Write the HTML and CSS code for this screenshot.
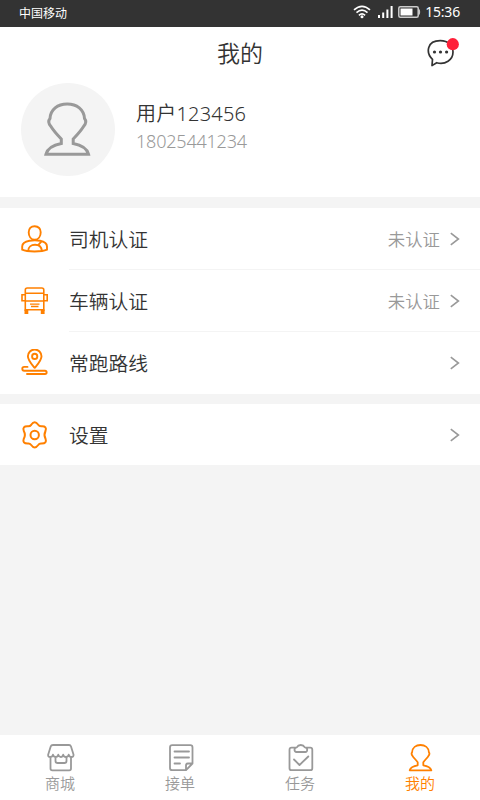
FILE: index.html
```html
<!DOCTYPE html>
<html lang="zh-CN">
<head>
<meta charset="utf-8">
<title>我的</title>
<link rel="stylesheet" href="styles.css">
</head>
<body>
<div class="app">
  <div class="status">
    <span class="carrier">中国移动</span>
    <div class="status-right">
      <svg class="wifi" width="18" height="14" viewBox="0 0 18 14" fill="none" stroke="#fff" stroke-width="1.6"><path d="M1 4.900Q9-2.300 17 4.900M3.500 7.700Q9 2.700 14.500 7.700M5.900 10.300Q9 7.400 12.100 10.300"/><circle cx="9" cy="11.800" r="1.500" fill="#fff" stroke="none"/></svg>
      <svg class="signal" width="15" height="12" viewBox="0 0 15 12" fill="#fff"><path d="M0 9h2v3H0zM4.200 6.500h2V12h-2zM8.400 3.500h2V12h-2zM12.600 0h2v12h-2z"/></svg>
      <svg class="battery" width="23" height="12" viewBox="0 0 23 12"><rect x=".8" y=".8" width="19.400" height="10.400" rx="1.500" fill="none" stroke="#ccc" stroke-width="1.500"/><path d="M2.500 2.500H14.500v7h-12z" fill="#fff"/><path d="M21 3.500q1.500 2.500 0 5z" fill="#ccc" stroke="#ccc"/></svg>
      <span class="time">15:36</span>
    </div>
  </div>

  <div class="top">
    <div class="titlebar">
      <h1>我的</h1>
      <svg class="chat" width="33" height="30" viewBox="0 0 33 30"><path d="M5.500 22.300C-1.500 15.500 0 3.700 13.200 3.700c8.500 0 12.800 5 12.800 11.300 0 8-7.800 13-16.300 10.700L5 28.600z" fill="none" stroke="#333" stroke-width="1.700" stroke-linejoin="round"/><g fill="#333"><circle cx="7.500" cy="15" r="1.600"/><circle cx="13.500" cy="15" r="1.600"/><circle cx="19.600" cy="15" r="1.600"/></g><circle cx="25.800" cy="7.200" r="6.100" fill="#ff1f38"/></svg>
    </div>
    <div class="profile">
      <div class="avatar">
        <svg width="47" height="54" viewBox="0 0 47 54" fill="none" stroke="#999" stroke-width="3"><path d="M17.300 41.500V37C13.500 33 8.500 27 6.800 24.200 4.500 21.500 4.300 18.500 6 16.500 6.500 7.500 13.500 2 23.200 2S40 7.500 40.500 16.500c1.700 2 1.500 5-.8 7.700C38 27 33 33 29.200 37v4.500C37 43 43 46.500 44.500 52.200H2C3.500 46.500 9.500 43 17.300 41.500z"/></svg>
      </div>
      <div class="user">
        <div class="name">用户123456</div>
        <div class="phone">18025441234</div>
      </div>
    </div>
  </div>

  <div class="group">
    <div class="row">
      <svg class="icon" width="28" height="28" viewBox="0 0 28 28" fill="none" stroke="#ff8000" stroke-width="1.900"><path d="M13.700 1.200C9.800 1.200 7.700 4 7.700 7.300c0 4 2.200 7.500 6 7.500s6-3.500 6-7.500c0-3.300-2.100-6.100-6-6.100z"/><path d="M8.500 15.700C4 16.500 1.200 18.500 1.200 21.500v3.200C6 27.100 21 27.100 26 24.700v-3.200c0-3-2.500-5-7-5.800-4-.500-6.500-.500-10.500 0zM7.200 26c0-4 3-6.300 6.800-6.300S20.600 22 20.800 26M17 20.300l3.500-4"/></svg>
      <span class="label">司机认证</span><span class="state">未认证</span>
      <svg class="arrow" width="10" height="14" viewBox="0 0 10 14"><path d="M.8 1.200L8.400 7 .8 12.800"/></svg>
    </div>
    <div class="row line">
      <svg class="icon" width="28" height="28" viewBox="0 0 28 28" fill="none" stroke="#ff8000" stroke-width="1.600"><path d="M4.300 24V3q0-2 2-2h14.500q2 0 2 2v21M4.300 6.200h18.500M4.300 14h18.500M3.500 22.800h20M4 7.700H1v6h3M23 7.700h3.200v6H23"/><path d="M9 17.200h9.500M10 19.500h7.500" stroke-width="1.300"/><path d="M3.500 22.500h3.800v4.500H3.500zM19.800 22.500h3.800v4.500h-3.800z" fill="#ff8000" stroke="none"/></svg>
      <span class="label">车辆认证</span><span class="state">未认证</span>
      <svg class="arrow" width="10" height="14" viewBox="0 0 10 14"><path d="M.8 1.200L8.400 7 .8 12.800"/></svg>
    </div>
    <div class="row line">
      <svg class="icon" width="28" height="28" viewBox="0 0 28 28" fill="none" stroke="#ff8000" stroke-width="1.900" stroke-linecap="round" stroke-linejoin="round"><path d="M13.700 18.800C10.500 15 6.900 11.500 6.900 7.300a6.800 6.800 0 0 1 13.600 0c0 4.200-3.600 7.700-6.800 11.500z"/><circle cx="13.700" cy="7.400" r="2.600"/><path d="M6.500 17.900H3.200a1.900 1.900 0 0 0 0 3.800H24a1.500 1.500 0 0 1 0 3.300H6"/></svg>
      <span class="label">常跑路线</span>
      <svg class="arrow" width="10" height="14" viewBox="0 0 10 14"><path d="M.8 1.200L8.400 7 .8 12.800"/></svg>
    </div>
  </div>

  <div class="group settings">
    <div class="row">
      <svg class="icon" width="28" height="28" viewBox="0 0 28 28" fill="none" stroke="#ff8000" stroke-width="2" stroke-linejoin="round"><path d="M10.200 3.800Q13.700-1.200 17.200 3.800Q18.300 5.500 20.500 5.300Q26.300 5 24.500 10Q22.500 14 24.500 17.700Q26.300 22.600 20.500 22.500Q18.300 22.300 17.200 24Q13.700 29 10.200 24Q9 22.300 6.900 22.500Q1 22.600 2.800 17.700Q5 14 2.800 10Q1 5 6.900 5.300Q9 5.500 10.200 3.800z"/><circle cx="13.700" cy="14" r="4.200"/></svg>
      <span class="label">设置</span>
      <svg class="arrow" width="10" height="14" viewBox="0 0 10 14"><path d="M.8 1.200L8.400 7 .8 12.800"/></svg>
    </div>
  </div>

  <div class="tabs">
    <div class="tab">
      <svg width="28" height="28" viewBox="0 0 28 28"><path d="M6 1H22q1.500 0 2 1.500l2.500 8q.300 2.500-2 2.500-2.300 0-2.800-2.300Q21 13 18.900 13t-2.700-2.300Q15.600 13 13.800 13t-2.500-2.300Q10.700 13 8.700 13T6 10.700Q5.500 13 3.200 13 .8 13 1.200 10.500l2.500-8Q4.200 1 6 1zM3.500 13v11.500q0 1.800 1.800 1.800h17q1.700 0 1.700-1.800V13M8.500 13v4q0 2 2 2h7q2 0 2-2v-4"/></svg>
      <span>商城</span>
    </div>
    <div class="tab">
      <svg width="28" height="28" viewBox="0 0 28 28"><path d="M19 26.200H5.300q-2.300 0-2.300-2.300V3.500q0-2.300 2.300-2.300h18q2.200 0 2.200 2.300V19.500zM19 26.200V21.500q0-2 2-2h4.500M7.500 7.500h14.500M7.500 13.500h14.500M7.500 19.500h5.500"/></svg>
      <span>接单</span>
    </div>
    <div class="tab">
      <svg width="28" height="28" viewBox="0 0 28 28"><path d="M9 3.700H4.500q-2 0-2 2v18.500q0 2 2 2h18.800q2 0 2-2V5.700q0-2-2-2H19M9.500 8q-2 0-2-2.300T9.800 3.300Q11 1 13.800 1t4 2.300q2.400 0 2.400 2.400T18.200 8zM7 15.500l5.500 5.500 8.800-8.500"/></svg>
      <span>任务</span>
    </div>
    <div class="tab active">
      <svg width="28" height="28" viewBox="0 0 28 28"><path d="M10.700 21.300v-3C8.500 15.500 7 14 5.700 12.200 4.200 10.500 4.200 9.500 5.100 8.300 5.300 3.700 9 1 13.500 1s8.200 2.700 8.400 7.300c.9 1.200.9 2.200-.6 3.900-1.300 1.800-2.800 3.300-5 6.100v3c4.500.7 7.200 2.200 8 5H2.700c.8-2.800 3.500-4.300 8-5z"/></svg>
      <span>我的</span>
    </div>
  </div>
</div>
</body>
</html>
```
FILE: styles.css
```css
* { box-sizing: border-box; }
body {
  margin: 0;
  font-family: "Noto Sans", "Noto Sans CJK SC", sans-serif;
  color: #333;
}
svg { display: block; flex: none; }
.app {
  display: flex;
  flex-direction: column;
  height: 800px;
  background: #f4f4f4;
}
.status {
  display: flex;
  justify-content: space-between;
  height: 27px;
  padding: 0 20px 0 19px;
  background: #333;
  color: #fff;
  font-size: 12px;
  line-height: 27px;
}
.status-right { display: flex; }
.wifi { margin: 5px 7px 0 0; }
.signal { margin: 6px 5px 0 0; }
.battery { margin: 6px 4px 0 0; }
.time {
  font-size: 14px;
  line-height: 24px;
  letter-spacing: -0.2px;
}
.top { height: 170px; background: #fff; }
.titlebar {
  display: grid;
  grid-template-columns: 60px 1fr 60px;
  height: 56px;
}
.titlebar h1 {
  grid-column: 2;
  margin: 0;
  font-size: 23px;
  font-weight: 350;
  line-height: 53px;
  text-align: center;
}
.chat { margin: 10px 0 0 7px; }
.profile { display: flex; padding-left: 21px; }
.avatar {
  display: flex;
  justify-content: center;
  width: 94px;
  height: 93px;
  padding: 19px 1px 0 0;
  border-radius: 50%;
  background: #f4f4f4;
}
.user { padding: 16px 0 0 21px; font-weight: 350; }
.name { font-size: 20px; line-height: 30px; letter-spacing: 0.2px; }
.phone {
  color: #999;
  font-size: 18px;
  line-height: 25px;
  letter-spacing: -0.2px;
}
.group { margin-top: 11px; background: #fff; }
.row {
  position: relative;
  display: flex;
  align-items: center;
  height: 62px;
  padding: 0 20px 0 21px;
}
.line::before {
  content: "";
  position: absolute;
  top: -1px;
  right: 0;
  left: 69px;
  height: 1px;
  background: #f4f4f4;
}
.label {
  flex: 1;
  margin-left: 20px;
  padding-top: 2px;
  font-size: 19.8px;
  font-weight: 350;
  line-height: 30px;
}
.state {
  margin-right: 10px;
  padding-bottom: 2px;
  color: #999;
  font-size: 17.4px;
  font-weight: 350;
}
.arrow { fill: none; stroke: #999; stroke-width: 1.6; }
.settings { margin-top: 10px; }
.settings .row { height: 61px; }
.tabs {
  display: grid;
  grid-template-columns: repeat(4, 1fr);
  height: 65px;
  margin-top: auto;
  background: #fff;
}
.tab {
  display: flex;
  flex-direction: column;
  align-items: center;
  padding-top: 9px;
  color: #999;
  font-size: 15px;
  font-weight: 350;
  line-height: 22px;
}
.tab svg {
  margin-left: 1px;
  fill: none;
  stroke: currentColor;
  stroke-width: 1.8;
  stroke-linecap: round;
  stroke-linejoin: round;
}
.active { color: #ff8000; }
```
